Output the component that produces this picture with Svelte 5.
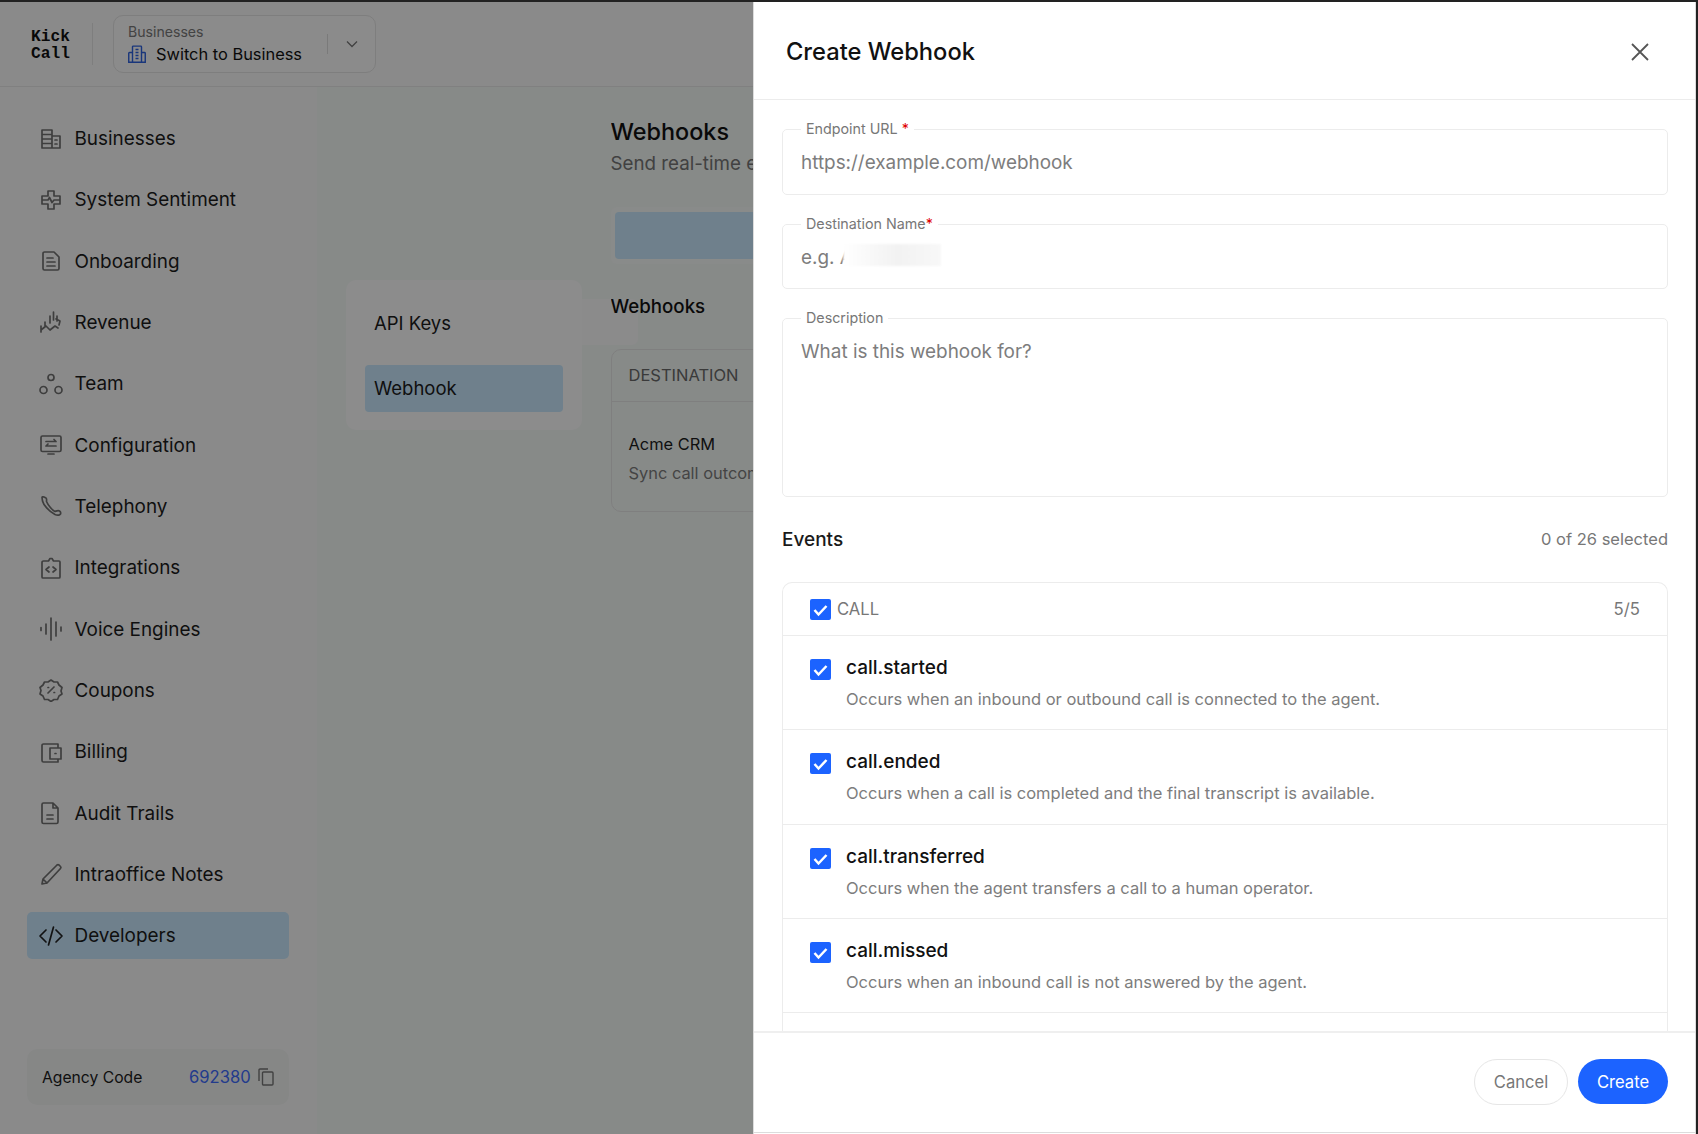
<script>
  const nav = [
    { label: 'Businesses', icon: 'M3 21V3h10v18M3 21h18V9h-8M3 7.500h10M3 12h10M3 16.500h10M16 13h2M16 17h2' },
    { label: 'System Sentiment', icon: 'M9 3h6v5h6v8h-6v5H9v-5H3V8h6zM3 12h6l1.500-2.500 2.500 5 2-2.500h6' },
    { label: 'Onboarding', icon: 'M4 4.500A1.500 1.500 0 0 1 5.500 3H15l5 5v11.500a1.500 1.500 0 0 1-1.500 1.500h-13A1.500 1.500 0 0 1 4 19.500zM8 9h6M8 13h8M8 17h8' },
    { label: 'Revenue', icon: 'M6 12v4M11 6v7M14.500 2v8M18 6v5M2 20l5-4 4 4 5-4 3 2M17 9l4 2-1 4M2 22v-6' },
    { label: 'Team', icon: 'M15 5.500a3 3 0 1 1-6 0 3 3 0 0 1 6 0zM8 18a3.500 3.500 0 1 1-7 0 3.500 3.500 0 0 1 7 0zM23 18a3.500 3.500 0 1 1-7 0 3.500 3.500 0 0 1 7 0z' },
    { label: 'Configuration', icon: 'M3.500 3h17A1.500 1.500 0 0 1 22 4.500V17a1.500 1.500 0 0 1-1.500 1.500h-17A1.500 1.500 0 0 1 2 17V4.500A1.500 1.500 0 0 1 3.500 3zM7 8.500h10M15 6.500l2 2M7 13h10M9 11l-2 2M9 21h6' },
    { label: 'Telephony', icon: 'M3 3.500C3 3 4 2.500 5 3l2 1c1 1 .5 2 .5 3.500C9 11 13 16 16 17.500c1.500-.5 3-1.500 4.500-.5 1.500 1 1.500 3 .5 3.500-1.500 1-3 1-5 0C9.500 17 4.500 11 3.500 7z' },
    { label: 'Integrations', icon: 'M4.500 5H9.500L11 2.500h2L14.500 5H20a1 1 0 0 1 1 1v15a1 1 0 0 1-1 1H4a1 1 0 0 1-1-1V6.500A1.500 1.500 0 0 1 4.500 5zM10 11l-3 2.500 3 2.500M14 11l3 2.500-3 2.500' },
    { label: 'Voice Engines', icon: 'M2 10.500v3M7 7v10M12 1v22M17 5v14M22 10v4' },
    { label: 'Coupons', icon: 'M12 2l3 2 3.500 0 1.500 3 3 2.500-1 3.500 1 3-3 2-1.500 3.500-3.500 0-3 2-3-2-3.500 0L4 18l-3-2 1-3.500L1 9.500 4 7l1.500-3 3.500 0zM15 9l-6 6M9 9.500h.6M15 14.500h.6' },
    { label: 'Billing', icon: 'M19 7V4H4.500A1.500 1.500 0 0 0 3 5.500v15A1.500 1.500 0 0 0 4.500 22H19v-3M11 8h11v11H11zM16 13.500h1' },
    { label: 'Audit Trails', icon: 'M4.500 2H14l5 5v14a1.500 1.500 0 0 1-1.500 1.500h-13A1.500 1.500 0 0 1 3 21V3.500A1.500 1.500 0 0 1 4.500 2zM14 2v5h5M8 14h6M8 18h6' },
    { label: 'Intraoffice Notes', icon: 'M3 22l1-5L18 3a1.500 1.500 0 0 1 2 0l1.500 1.500a1.500 1.500 0 0 1 0 2L8 21zM4 17l4 4' },
    { label: 'Developers', icon: 'M7 6l-6 6 6 6M17 6l6 6-6 6M14.500 3l-5 18', active: true }
  ];
  const events = [
    { name: 'call.started', desc: 'Occurs when an inbound or outbound call is connected to the agent.' },
    { name: 'call.ended', desc: 'Occurs when a call is completed and the final transcript is available.' },
    { name: 'call.transferred', desc: 'Occurs when the agent transfers a call to a human operator.' },
    { name: 'call.missed', desc: 'Occurs when an inbound call is not answered by the agent.' }
  ];
</script>

<div class="page">
  <header class="topbar">
    <div class="logo">Kick<br />Call</div>
    <span class="logo-rule"></span>
    <div class="switcher">
      <div class="switch-text">
        <span class="switch-label">Businesses</span>
        <span class="switch-value">
          <svg class="switch-icon" viewBox="0 0 24 24" fill="none" stroke="currentColor" stroke-width="1.900">
            <path d="M6 23V2.500a1 1 0 0 1 1-1h10a1 1 0 0 1 1 1V23M6 10H2a1 1 0 0 0-1 1v12h22V11a1 1 0 0 0-1-1h-4M10 6h4M10 10h4M10 14h4M10 18h4" />
          </svg>
          Switch to Business
        </span>
      </div>
      <span class="switch-rule"></span>
      <svg class="chev" viewBox="0 0 12 8" fill="none" stroke="currentColor" stroke-width="1.300"><path d="M1 1.500l5 5 5-5" /></svg>
    </div>
  </header>

  <div class="below">
    <aside class="sidebar">
      <nav class="nav">
        {#each nav as item}
          <div class="nav-item" class:active={item.active}>
            <svg class="nav-icon" viewBox="0 0 24 24" fill="none" stroke="currentColor" stroke-width="1.700" stroke-linecap="round" stroke-linejoin="round"><path d={item.icon} /></svg>
            <span>{item.label}</span>
          </div>
        {/each}
      </nav>
      <div class="agency">
        <span class="agency-label">Agency Code</span>
        <span class="agency-value">692380</span>
        <svg class="copy" viewBox="0 0 16 18" fill="none" stroke="currentColor" stroke-width="1.400"><rect x="4.500" y="4" width="10.500" height="13" rx="1" /><path d="M1 13V2a1 1 0 0 1 1-1h8" /></svg>
      </div>
    </aside>

    <main class="main">
      <div class="ghost-tab"></div>
      <div class="subnav">
        <div class="sub-item">API Keys</div>
        <div class="sub-item sub-active">Webhook</div>
      </div>
      <div class="content">
        <h1>Webhooks</h1>
        <p class="sub">Send real-time events to your endpoints</p>
        <div class="btn-ghost"><div class="btn-fill"></div></div>
        <h2>Webhooks</h2>
        <div class="table">
          <div class="thead">DESTINATION</div>
          <div class="tbody">
            <div class="acme">Acme CRM</div>
            <div class="sync">Sync call outcomes</div>
          </div>
        </div>
      </div>
    </main>
  </div>

  <div class="overlay"></div>

  <section class="modal">
    <div class="modal-head">
      <h3>Create Webhook</h3>
      <svg class="close" viewBox="0 0 18 18" fill="none" stroke="currentColor" stroke-width="1.800"><path d="M1 1l16 16M17 1L1 17" /></svg>
    </div>

    <div class="modal-body">
      <fieldset class="field f1">
        <legend>Endpoint URL <b>*</b></legend>
        <div class="ph">https://example.com/webhook</div>
      </fieldset>
      <fieldset class="field f2">
        <legend>Destination Name<b>*</b></legend>
        <div class="ph">e.g. Acme CRM</div>
        <span class="blur"></span>
      </fieldset>
      <fieldset class="field f3">
        <legend>Description</legend>
        <div class="ph">What is this webhook for?</div>
      </fieldset>

      <div class="events-head">
        <span class="events-title">Events</span>
        <span class="events-count">0 of 26 selected</span>
      </div>

      <div class="group">
        <div class="group-head">
          <span class="check"><svg viewBox="0 0 21 21" fill="none" stroke="#fff" stroke-width="2.500"><path d="M4.500 11l4 4.500 8-8.500" /></svg></span>
          <span class="group-name">CALL</span>
          <span class="group-count">5/5</span>
        </div>
        {#each events as ev}
          <div class="row">
            <span class="check"><svg viewBox="0 0 21 21" fill="none" stroke="#fff" stroke-width="2.500"><path d="M4.500 11l4 4.500 8-8.500" /></svg></span>
            <div class="row-text">
              <div class="row-name">{ev.name}</div>
              <div class="row-desc">{ev.desc}</div>
            </div>
          </div>
        {/each}
      </div>
    </div>

    <div class="modal-foot">
      <button class="cancel">Cancel</button>
      <button class="create">Create</button>
    </div>
  </section>
</div>

<style>
  :global(body) { margin: 0; background: #222; }
  .page {
    position: relative;
    width: 1698px;
    height: 1134px;
    overflow: hidden;
    box-sizing: border-box;
    border-top: 2px solid #222;
    border-right: 2px solid #222;
    background: #fcfcfc;
    font-family: Inter, "Noto Sans", sans-serif;
    color: #1c1c1c;
  }
  .topbar {
    height: 85px;
    box-sizing: border-box;
    border-bottom: 1px solid #e9e9e9;
    display: flex;
    align-items: center;
    padding-left: 31px;
  }
  .logo {
    font-family: "Liberation Mono", monospace;
    font-weight: 700;
    font-size: 16.200px;
    line-height: 17px;
    color: #111;
    width: 61px;
    margin-top: 3px;
  }
  .logo-rule { width: 1px; height: 42px; background: #e5e5e5; }
  .switcher {
    margin-left: 20px;
    width: 263px;
    height: 58px;
    box-sizing: border-box;
    border: 1px solid #e5e5e5;
    border-radius: 10px;
    display: flex;
    align-items: center;
    padding-left: 14px;
    background: #fdfdfd;
    margin-top: -1px;
  }
  .switch-text { width: 199px; display: flex; flex-direction: column; padding-top: 2px; }
  .switch-label { font-size: 14.100px; line-height: 18px; color: #7a7a7a; }
  .switch-value { display: flex; align-items: center; gap: 10px; font-size: 16.400px; line-height: 24px; color: #111; margin-top: 1px; }
  .switch-icon { width: 18px; height: 18px; color: #2f63e0; }
  .switch-rule { width: 1px; height: 20px; background: #dedede; }
  .chev { width: 12px; height: 8px; margin-left: 18px; color: #777; }

  .below { display: flex; height: 1047px; }
  .sidebar {
    width: 317px;
    box-sizing: border-box;
    padding: 28px 28px 29px 27px;
    display: flex;
    flex-direction: column;
    justify-content: space-between;
  }
  .nav { display: flex; flex-direction: column; gap: 14.330px; }
  .nav-item {
    height: 47px;
    border-radius: 5px;
    display: flex;
    align-items: center;
    gap: 11.500px;
    padding-left: 12px;
    font-size: 18.900px;
  }
  .nav-icon { width: 24px; height: 24px; color: #727272; flex: none; }
  .nav-item.active { background: #cae9ff; }
  .nav-item.active .nav-icon { color: #222; width: 26px; height: 24px; margin-left: -1px; margin-right: -1px; }
  .agency {
    height: 56px;
    border-radius: 10px;
    background: #f4f6f5;
    display: flex;
    align-items: center;
    padding-left: 15px;
    font-size: 15.700px;
  }
  .agency-label { width: 147px; }
  .agency-value { color: #3e6cff; font-size: 16.600px; }
  .copy { width: 16px; height: 18px; color: #777; margin-left: 7px; }

  .main { position: relative; flex: 1; background: #f6fbf8; display: flex; padding-left: 29px; box-sizing: border-box; }
  .ghost-tab { position: absolute; left: 265px; top: 212px; width: 56px; height: 46px; background: #fdfdfd; border-radius: 0 6px 6px 0; }
  .subnav {
    position: relative;
    margin-top: 193px;
    width: 236px;
    height: 150px;
    box-sizing: border-box;
    padding: 20px 19px;
    background: #ffffff;
    border-radius: 10px;
    display: flex;
    flex-direction: column;
    gap: 18px;
  }
  .sub-item { height: 47px; line-height: 47px; padding-left: 9px; font-size: 18.500px; border-radius: 4px; flex: none; }
  .sub-active { background: #cae9ff; height: 47px; }
  .content { position: relative; margin-left: 28.500px; padding-top: 30px; width: 142.500px; overflow: hidden; }
  h1 { margin: 0; font-size: 23.400px; line-height: 30px; font-weight: 500; color: #111; }
  .sub { margin: 5px 0 0; font-size: 18.750px; line-height: 24px; color: #777; white-space: nowrap; }
  .btn-ghost { margin-top: 31px; width: 600px; height: 57px; padding: 5px 0 5px 4px; box-sizing: border-box; background: #fafdfb; border-radius: 6px; }
  .btn-fill { height: 47px; background: #cae9ff; border-radius: 4px; }
  h2 { margin: 30px 0 0; font-size: 18.700px; line-height: 26px; font-weight: 500; color: #111; }
  .table { margin-top: 29px; width: 600px; border: 1px solid #e8e8e8; border-radius: 10px; height: 163px; box-sizing: border-box; }
  .thead { height: 52px; line-height: 51px; padding-left: 17px; font-size: 16.500px; color: #6a6a6a; border-bottom: 1px solid #e8e8e8; box-sizing: border-box; }
  .tbody { padding: 30px 17px 0; }
  .acme { font-size: 16.400px; line-height: 24px; }
  .sync { font-size: 16.400px; line-height: 24px; margin-top: 5px; color: #7d7d7d; white-space: nowrap; }

  .overlay { position: absolute; inset: 0; background: rgba(0, 0, 0, 0.45); }

  .modal {
    position: absolute;
    left: 753px;
    top: 0;
    width: 943px;
    height: 1132px;
    box-sizing: border-box;
    background: #fff;
    display: flex;
    flex-direction: column;
    border-left: 1px solid #dcdcdc;
    border-right: 1px solid #dcdcdc;
  }
  .modal-head {
    height: 98px;
    flex: none;
    box-sizing: border-box;
    border-bottom: 1px solid #ececec;
    display: flex;
    align-items: center;
    justify-content: space-between;
    padding: 2px 46px 0 32px;
  }
  h3 { margin: 0; font-size: 23.700px; font-weight: 500; color: #111; }
  .close { width: 18px; height: 18px; color: #555; }
  .modal-body { flex: 1; min-height: 0; overflow: hidden; padding: 20px 27px 0 28px; }
  .field {
    position: relative;
    margin: 0;
    padding: 0 18px;
    border: 1px solid #ececec;
    border-radius: 5px;
    box-sizing: border-box;
    min-width: 0;
  }
  .f1 { height: 75px; margin-bottom: 20px; }
  .f2 { height: 74px; margin-bottom: 20px; }
  .f3 { height: 188px; margin-bottom: 27px; }
  legend { margin-left: 0; padding: 0 5px; font-size: 14.300px; line-height: 18px; color: #777; }
  legend b { color: #e00000; font-weight: 400; }
  .ph { font-size: 18.900px; line-height: 26px; color: #7d7d7d; margin-top: 12px; }
  .blur {
    position: absolute;
    left: 60px;
    top: 11px;
    width: 98px;
    height: 22px;
    background: linear-gradient(90deg, #fff, #f2f2f2 55%, #f8f8f8);
    filter: blur(1px);
  }
  .events-head { display: flex; justify-content: space-between; align-items: center; height: 30px; margin-bottom: 28px; }
  .events-title { font-size: 19px; font-weight: 500; color: #1a1a1a; }
  .events-count { font-size: 16.500px; color: #777; }
  .group { border: 1px solid #ececec; border-bottom: 0; border-radius: 10px 10px 0 0; padding-bottom: 60px; }
  .group-head { height: 53px; box-sizing: border-box; display: flex; align-items: center; padding: 0 27px; border-bottom: 1px solid #ececec; }
  .check { width: 21px; height: 21px; background: #1c63ff; border-radius: 2px; flex: none; display: block; }
  .check svg { display: block; width: 21px; height: 21px; }
  .group-name { margin-left: 6px; font-size: 16.600px; color: #777; flex: 1; }
  .group-count { font-size: 16.800px; color: #777; }
  .row { height: 94.330px; box-sizing: border-box; display: flex; padding: 23px 27px 0; border-bottom: 1px solid #ececec; }
  .row-text { margin-left: 15px; margin-top: -3px; }
  .row-name { font-size: 19px; line-height: 24px; font-weight: 500; color: #111; }
  .row-desc { font-size: 16.500px; line-height: 24px; margin-top: 7px; color: #7d7d7d; }
  .modal-foot {
    height: 102px;
    flex: none;
    box-sizing: border-box;
    border-top: 2px solid #efefef;
    border-bottom: 1px solid #dcdcdc;
    margin-bottom: 1px;
    display: flex;
    justify-content: flex-end;
    align-items: center;
    gap: 10px;
    padding: 0 27px 2px 0;
  }
  button { font-family: inherit; font-size: 16.600px; border-radius: 24px; cursor: pointer; }
  .cancel { width: 94px; height: 46px; background: #fff; border: 1px solid #e6e6e6; color: #777; }
  .create { width: 90px; height: 45px; background: #1c63ff; border: 0; color: #fff; }
</style>
